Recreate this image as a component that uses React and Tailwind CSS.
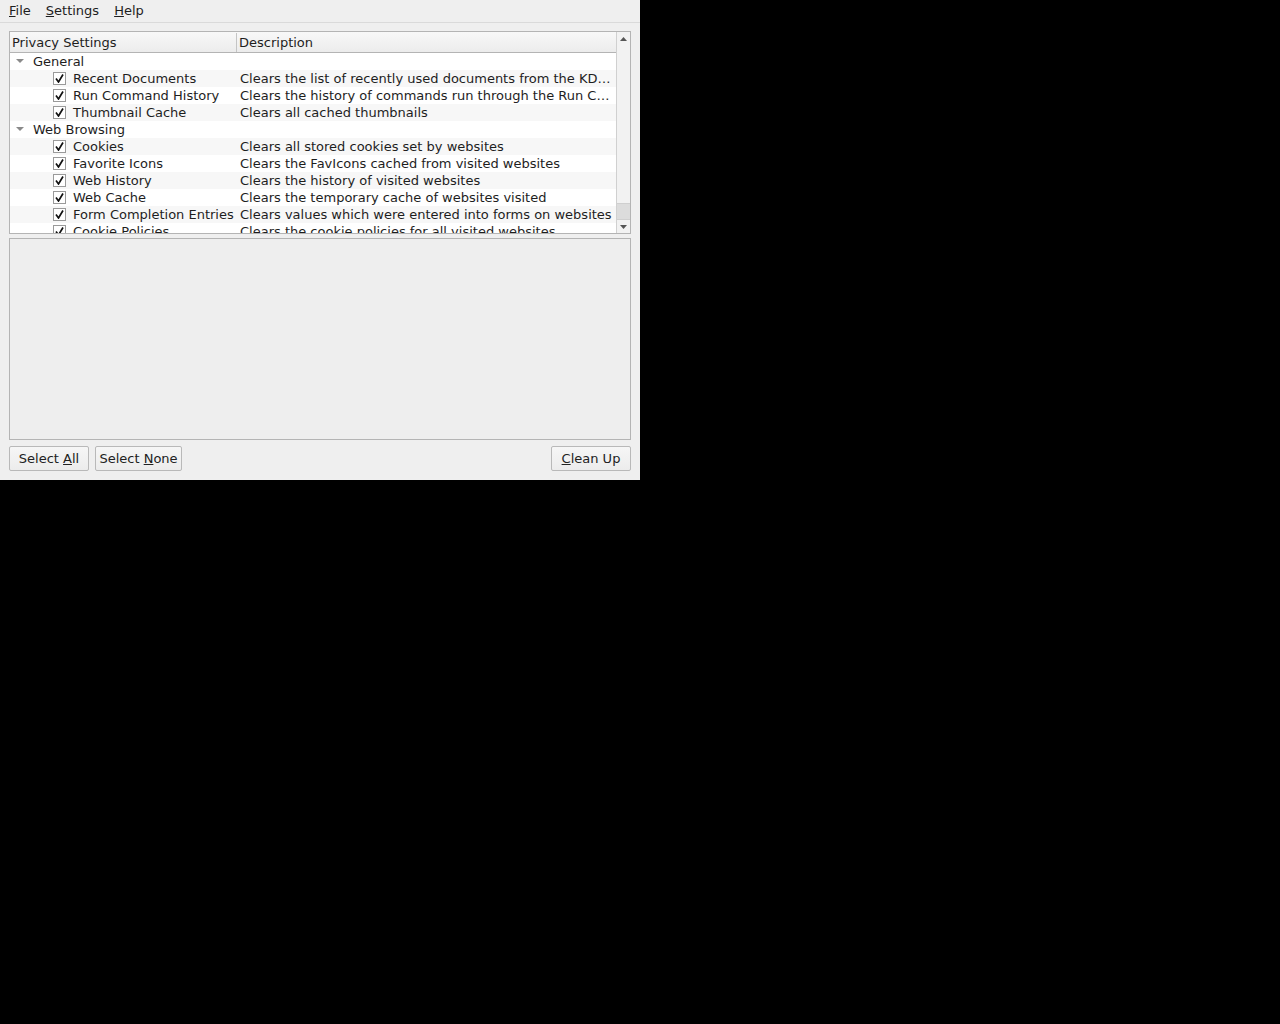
import React from "react"

const FONT = { fontFamily: '"DejaVu Sans", "Liberation Sans", sans-serif' }

const groups = [
  {
    name: "General",
    items: [
      ["Recent Documents", "Clears the list of recently used documents from the KDE applications menu"],
      ["Run Command History", "Clears the history of commands run through the Run Command tool on the desktop"],
      ["Thumbnail Cache", "Clears all cached thumbnails"],
    ],
  },
  {
    name: "Web Browsing",
    items: [
      ["Cookies", "Clears all stored cookies set by websites"],
      ["Favorite Icons", "Clears the FavIcons cached from visited websites"],
      ["Web History", "Clears the history of visited websites"],
      ["Web Cache", "Clears the temporary cache of websites visited"],
      ["Form Completion Entries", "Clears values which were entered into forms on websites"],
      ["Cookie Policies", "Clears the cookie policies for all visited websites"],
    ],
  },
]

const Check = () => (
  <span className="w-[13px] h-[13px] bg-white border border-[#9a9a9a] flex items-center justify-center shrink-0">
    <svg width="9" height="9" viewBox="0 0 9 9">
      <path d="M1 4.5 L3.5 8 L8 0.5" fill="none" stroke="#111" strokeWidth="1.7" />
    </svg>
  </span>
)

const Arrow = () => (
  <svg width="8" height="5" viewBox="0 0 8 5" className="shrink-0">
    <path d="M0 0 L8 0 L4 4 Z" fill="#8a8a8a" />
  </svg>
)

const Btn = ({ children, className = "" }) => (
  <button className={`h-[25px] border border-[#b9b9b9] rounded-[2px] bg-gradient-to-b from-[#f6f6f6] to-[#ececec] text-[13px] text-[#222] leading-none ${className}`}>
    {children}
  </button>
)

export default function App() {
  let row = 0
  const rows = []
  groups.forEach((g) => {
    const alt = row % 2 === 1
    row++
    rows.push(
      <div key={g.name} className={`h-[17px] flex items-center ${alt ? "bg-[#f7f7f7]" : "bg-white"}`}>
        <div className="w-[227px] flex items-center pl-[6px] gap-[9px]">
          <Arrow />
          <span>{g.name}</span>
        </div>
      </div>
    )
    g.items.forEach(([name, desc]) => {
      const a = row % 2 === 1
      row++
      rows.push(
        <div key={name} className={`h-[17px] flex items-center ${a ? "bg-[#f7f7f7]" : "bg-white"}`}>
          <div className="w-[227px] shrink-0 flex items-center pl-[43px] gap-[7px] whitespace-nowrap">
            <Check />
            <span>{name}</span>
          </div>
          <div className="flex-1 min-w-0 pl-[3px] pr-0 truncate">{desc}</div>
        </div>
      )
    })
  })

  return (
    <div className="w-full h-[1024px] bg-black" style={FONT}>
      <div className="w-[640px] h-[480px] bg-[#efefef] text-[13px] text-[#1e1e1e] flex flex-col">
        {/* menu bar */}
        <div className="h-[23px] border-b border-[#dadada] flex items-center gap-[15px] pl-[9px] pb-[1px]">
          <span><span className="underline">F</span>ile</span>
          <span><span className="underline">S</span>ettings</span>
          <span><span className="underline">H</span>elp</span>
        </div>

        <div className="flex-1 flex flex-col px-[9px] pt-[8px] pb-[9px]">
          {/* tree */}
          <div className="h-[203px] border border-[#b4b4b4] bg-white flex overflow-hidden">
            <div className="flex-1 min-w-0 flex flex-col overflow-hidden">
              <div className="h-[21px] shrink-0 flex border-b border-[#b4b4b4] bg-gradient-to-b from-[#f8f8f8] to-[#ececec] pt-[1px]">
                <div className="w-[227px] border-r border-[#c4c4c4] pl-[2px] flex items-center">Privacy Settings</div>
                <div className="flex-1 pl-[2px] flex items-center">Description</div>
              </div>
              <div className="flex-1 overflow-hidden">{rows}</div>
            </div>
            {/* scrollbar */}
            <div className="w-[14px] shrink-0 border-l border-[#d0d0d0] bg-[#f2f2f2] flex flex-col">
              <div className="h-[13px] flex items-center justify-center">
                <svg width="7" height="4" viewBox="0 0 7 4"><path d="M0 4 L7 4 L3.5 0 Z" fill="#555" /></svg>
              </div>
              <div className="flex-1 flex flex-col justify-end">
                <div className="h-[17px] bg-[#dcdcdc] border-y border-[#cfcfcf]" />
              </div>
              <div className="h-[13px] flex items-center justify-center">
                <svg width="7" height="4" viewBox="0 0 7 4"><path d="M0 0 L7 0 L3.5 4 Z" fill="#555" /></svg>
              </div>
            </div>
          </div>

          {/* details panel */}
          <div className="mt-[4px] h-[202px] border border-[#b4b4b4] bg-[#eeeeee]" />

          {/* buttons */}
          <div className="mt-[6px] flex items-center">
            <Btn className="w-[80px]">Select <span className="underline">A</span>ll</Btn>
            <Btn className="w-[87px] ml-[6px]">Select <span className="underline">N</span>one</Btn>
            <div className="flex-1" />
            <Btn className="w-[80px]"><span className="underline">C</span>lean Up</Btn>
          </div>
        </div>
      </div>
    </div>
  )
}
